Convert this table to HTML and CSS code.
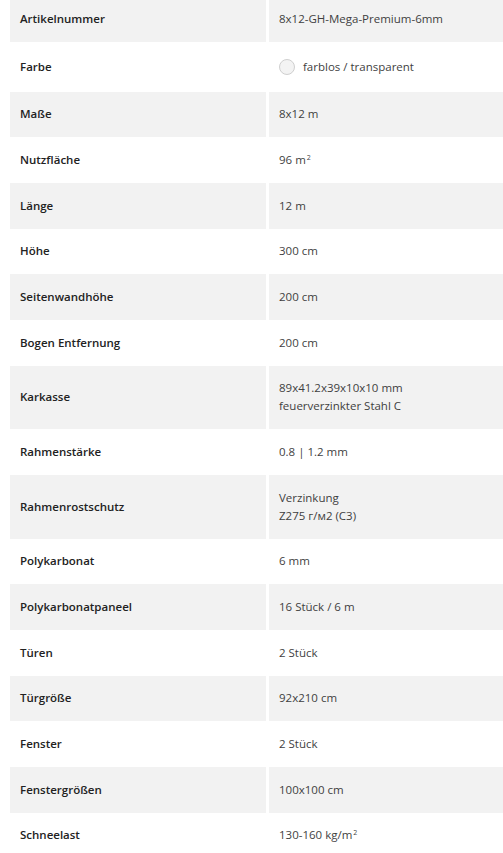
FILE: index.html
```html
<!DOCTYPE html>
<html lang="de">
<head>
<meta charset="utf-8">
<title>Produktdaten</title>
<link rel="stylesheet" href="styles.css">
</head>
<body>
<table class="specs">
  <tbody>
    <tr class="odd"><th>Artikelnummer</th><td>8x12-GH-Mega-Premium-6mm</td></tr>
    <tr class="even"><th>Farbe</th><td><span class="swatch-wrap"><span class="swatch"></span><span>farblos / transparent</span></span></td></tr>
    <tr class="odd"><th>Maße</th><td>8x12 m</td></tr>
    <tr class="even"><th>Nutzfläche</th><td>96 m<span class="sup">2</span></td></tr>
    <tr class="odd"><th>Länge</th><td>12 m</td></tr>
    <tr class="even"><th>Höhe</th><td>300 cm</td></tr>
    <tr class="odd"><th>Seitenwandhöhe</th><td>200 cm</td></tr>
    <tr class="even"><th>Bogen Entfernung</th><td>200 cm</td></tr>
    <tr class="odd"><th>Karkasse</th><td>89x41.2x39x10x10 mm<br>feuerverzinkter Stahl C</td></tr>
    <tr class="even"><th>Rahmenstärke</th><td>0.8 | 1.2 mm</td></tr>
    <tr class="odd"><th>Rahmenrostschutz</th><td>Verzinkung<br>Z275 г/м2 (С3)</td></tr>
    <tr class="even"><th>Polykarbonat</th><td>6 mm</td></tr>
    <tr class="odd"><th>Polykarbonatpaneel</th><td>16 Stück / 6 m</td></tr>
    <tr class="even"><th>Türen</th><td>2 Stück</td></tr>
    <tr class="odd"><th>Türgröße</th><td>92x210 cm</td></tr>
    <tr class="even"><th>Fenster</th><td>2 Stück</td></tr>
    <tr class="odd"><th>Fenstergrößen</th><td>100x100 cm</td></tr>
    <tr class="even"><th>Schneelast</th><td>130-160 kg/m<span class="sup">2</span></td></tr>
  </tbody>
</table>
</body>
</html>
```

FILE: styles.css
```css
html, body {
  margin: 0;
  padding: 0;
  background: #ffffff;
  overflow-x: hidden;
}

body {
  font-family: "Open Sans", "Noto Sans", "Liberation Sans", sans-serif;
  font-size: 11.5px;
  color: #444444;
}

.specs {
  border-collapse: separate;
  border-spacing: 3px 0;
  margin: -3.67px 0 0 7px;
  width: 499px;
  table-layout: fixed;
}

.specs th,
.specs td {
  padding: 13.83px 10px;
  line-height: 18px;
  text-align: left;
  vertical-align: middle;
}

.specs th {
  width: 236px;
  font-weight: 600;
  color: #222222;
}

.specs td {
  font-weight: 400;
  color: #3f3f3f;
}

.specs .odd th,
.specs .odd td {
  background: #f2f2f2;
}

.specs .even th,
.specs .even td {
  background: #ffffff;
}

.sup {
  font-size: 7px;
  vertical-align: 4px;
  line-height: 0;
  margin-left: 1px;
}

.swatch-wrap {
  display: inline-flex;
  align-items: center;
  gap: 8px;
  height: 22px;
  vertical-align: middle;
}

.swatch {
  display: inline-block;
  width: 14px;
  height: 14px;
  border-radius: 50%;
  background: #f3f3f3;
  border: 1px solid #cfcfcf;
}
```
